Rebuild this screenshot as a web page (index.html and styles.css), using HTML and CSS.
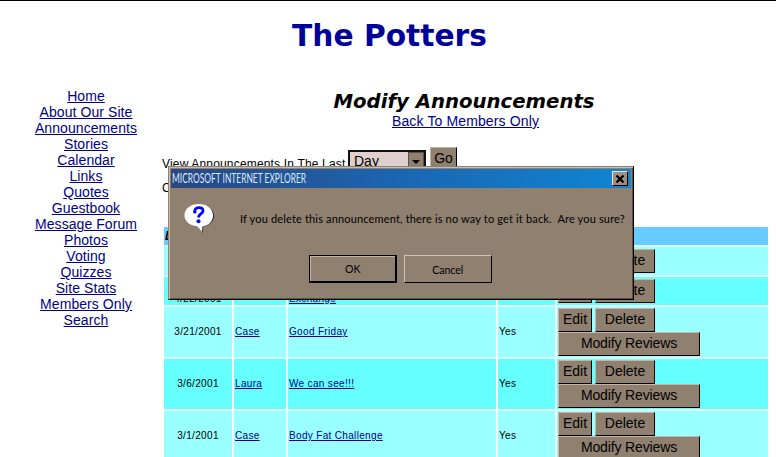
FILE: index.html
```html
<!DOCTYPE html>
<html lang="en">
<head>
<meta charset="utf-8">
<title>The Potters</title>
<link rel="stylesheet" href="styles.css">
</head>
<body>
<h1 class="site-title"><span>The Potters</span></h1>
<div class="layout">
  <nav class="nav">
    <a>Home</a><a>About Our Site</a><a>Announcements</a><a>Stories</a><a>Calendar</a><a>Links</a><a>Quotes</a><a>Guestbook</a><a>Message Forum</a><a>Photos</a><a>Voting</a><a>Quizzes</a><a>Site Stats</a><a>Members Only</a><a>Search</a>
  </nav>
  <main class="main">
    <h2 class="heading">Modify Announcements</h2>
    <a class="back">Back To Members Only</a>
    <div class="filter">
      <span class="filter-label">View Announcements In The Last</span>
      <span class="select"><span>Day</span><span class="select-arrow"><svg width="8" height="4" viewBox="0 0 8 4"><path d="M0 0h8L4 4z"/></svg></span></span>
      <span class="btn go">Go</span>
    </div>
    <div class="filter-more">C</div>
    <div class="grid">
      <div class="row head"><b>D</b><b></b><b></b><b></b><b></b></div>
      <div class="row short light"><div></div><div></div><div></div><div></div><div class="actions"><span class="btn edit">Edit</span><span class="btn delete">Delete</span></div></div>
      <div class="row short dark low"><div class="date">4/22/2001</div><div></div><div><a>Exchange</a></div><div></div><div class="actions"><span class="btn edit">Edit</span><span class="btn delete">Delete</span></div></div>
      <div class="row light"><div class="date">3/21/2001</div><div><a>Case</a></div><div><a>Good Friday</a></div><div>Yes</div><div class="actions"><span class="btn edit">Edit</span><span class="btn delete">Delete</span><span class="btn reviews">Modify Reviews</span></div></div>
      <div class="row dark"><div class="date">3/6/2001</div><div><a>Laura</a></div><div><a>We can see!!!</a></div><div>Yes</div><div class="actions"><span class="btn edit">Edit</span><span class="btn delete">Delete</span><span class="btn reviews">Modify Reviews</span></div></div>
      <div class="row light"><div class="date">3/1/2001</div><div><a>Case</a></div><div><a>Body Fat Challenge</a></div><div>Yes</div><div class="actions"><span class="btn edit">Edit</span><span class="btn delete">Delete</span><span class="btn reviews">Modify Reviews</span></div></div>
    </div>
  </main>
</div>
<div class="dialog">
  <div class="titlebar"><span class="caption">MICROSOFT INTERNET EXPLORER</span>
    <span class="close"><svg width="10" height="8" viewBox="0 0 10 8"><path d="M1.500 0.500l7 7M8.500 0.500l-7 7" stroke="#000" stroke-width="2.200"/></svg></span>
  </div>
  <div class="message">
    <svg class="bubble" width="32" height="32" viewBox="0 0 32 32">
      <path d="M16 3C8 3 2 7 2 14c0 6 5 10 12 11 2 1.500 2 3 5 6-.8-3-.5-4.500 0-6 6-1.500 11-5.500 11-11C30 7 24 3 16 3z" fill="#222"/>
      <path d="M15 2C6.500 2 .5 6.500.5 13.500c0 6 5.500 10 12.500 11 2.500 1.500 3 3.500 5 5.500-.3-2.500 0-4 .5-5.500 6-1 10.500-5 10.500-11C29 6.500 23 2 15 2z" fill="#fff"/>
      <path d="M10.500 10.500c0-6.500 9-6 8.500-1.500-.3 3-4.500 3-4.500 6.500" fill="none" stroke="#00f" stroke-width="2.800"/>
      <circle cx="11" cy="10" r="1.600" fill="#00f"/><circle cx="14.500" cy="19.300" r="2" fill="#00f"/>
    </svg>
    <span class="message-text">If you delete this announcement, there is no way to get it back.&nbsp; Are you sure?</span>
  </div>
  <div class="dialog-buttons"><span class="dbtn default"><span class="squeeze">OK</span></span><span class="dbtn"><span class="squeeze">Cancel</span></span></div>
</div>
</body>
</html>
```
FILE: styles.css
```css
* { box-sizing: border-box; }
body {
  margin: 0;
  height: 457px;
  overflow: hidden;
  border-top: 1px solid #000;
  background: #fff;
  color: #000;
  font-family: "Liberation Sans", Arial, sans-serif;
}
a { color: #000090; text-decoration: underline; }
.site-title {
  margin: 0;
  height: 87px;
  padding: 16px 0 0 3px;
  text-align: center;
  font: bold 29.700px/38px "DejaVu Sans", Verdana, sans-serif;
  color: #000099;
}
.layout { display: grid; grid-template-columns: 164px 604px; }
.nav {
  display: flex;
  flex-direction: column;
  width: 172px;
  text-align: center;
  font-size: 14px;
  line-height: 16px;
  letter-spacing: .07px;
}
.main { display: flex; flex-direction: column; }
.heading {
  margin: 3px 0 0;
  padding-right: 4px;
  text-align: center;
  font: italic bold 19.700px/22px "DejaVu Sans", Verdana, sans-serif;
}
.back { padding-right: 1px; text-align: center; font-size: 14px; line-height: 16px; letter-spacing: .13px; }
.filter { display: flex; height: 44px; padding-top: 18px; margin-left: -2px; }
.filter-label { width: 186px; padding-top: 9px; font-size: 12px; line-height: 16px; letter-spacing: .17px; white-space: nowrap; }
.select {
  display: flex;
  justify-content: space-between;
  width: 78px;
  height: 24px;
  margin: 3px 4px 0 0;
  padding-left: 4px;
  border: 2px solid #111;
  background: #dfd0cd;
  font-size: 14px;
  line-height: 19px;
}
.select-arrow { display: flex; align-items: center; justify-content: center; width: 16px; background: #908070; border: 1px solid #5c5048; }
.filter-more { height: 54px; margin-left: -2px; padding-top: 7px; font-size: 12px; line-height: 16px; }
.btn {
  display: flex;
  align-items: center;
  justify-content: center;
  height: 24px;
  padding-bottom: 2px;
  border: 1px solid #c5b5a9;
  border-right: 1px solid #000;
  border-bottom: 1px solid #000;
  background: #908070;
  color: #000;
  font-size: 14px;
  line-height: 20px;
}
.go { width: 27px; margin-top: 0; }
.grid { display: flex; flex-direction: column; gap: 2px; background: #e2ffff; }
.row {
  display: grid;
  grid-template-columns: 68px 52px 208px 57px 211px;
  column-gap: 2px;
  height: 50px;
  background: #f4ffff;
  font-size: 10px;
  letter-spacing: .33px;
}
.row > * { display: flex; align-items: center; padding: 0 0 1px 1px; }
.light > * { background: #99ffff; }
.dark > * { background: #66ffff; }
.row > .date { justify-content: center; padding-left: 0; }
.head { height: 18px; background: #66ccff; font-style: italic; font-size: 12px; }
.short { height: 28px; }
.low > * { align-items: flex-end; padding-bottom: 1px; }
.row > .actions { flex-wrap: wrap; align-content: center; column-gap: 3px; padding-bottom: 0; letter-spacing: 0; }
.edit { width: 34px; }
.delete { width: 60px; }
.reviews { width: 142px; letter-spacing: -.13px; }
.dialog {
  position: absolute;
  left: 168px;
  top: 166px;
  width: 466px;
  height: 134px;
  padding: 1px;
  border: 1px solid;
  border-color: #908070 #000 #000 #908070;
  background: #908070;
  box-shadow: inset 1px 1px #c9bbb0, inset -1px -1px #5e5148;
  font-family: Lato, sans-serif;
}
.titlebar {
  display: flex;
  align-items: center;
  justify-content: space-between;
  height: 19px;
  margin: 1px 1px 0;
  padding: 0 3px 0 1px;
  background: linear-gradient(90deg, #294782, #1b66b2 50%, #0d86d5);
}
.caption { color: #dcecff; font-size: 12px; transform: scale(.7, 1.1); transform-origin: left; white-space: nowrap; }
.close {
  display: flex;
  align-items: center;
  justify-content: center;
  width: 16px;
  height: 15px;
  background: #a08d80;
  border: 1px solid;
  border-color: #eadfd8 #000 #000 #eadfd8;
}
.message { display: flex; height: 67px; padding: 14px 0 0 14px; }
.bubble { flex: none; }
.message-text { margin-left: 24px; padding-top: 9px; font-size: 11px; line-height: 16px; letter-spacing: .16px; white-space: nowrap; }
.dialog-buttons { display: flex; gap: 7px; margin-left: 139px; }
.dbtn {
  display: flex;
  align-items: center;
  justify-content: center;
  width: 88px;
  height: 28px;
  border: 1px solid;
  border-color: #d2c3b8 #000 #000 #d2c3b8;
  font-size: 12px;
}
.squeeze { transform: scaleX(.88); }
.default { border: 1px solid #000; border-right-width: 2px; border-bottom-width: 2px; box-shadow: inset 1px 1px #c5b5a9; }
```
